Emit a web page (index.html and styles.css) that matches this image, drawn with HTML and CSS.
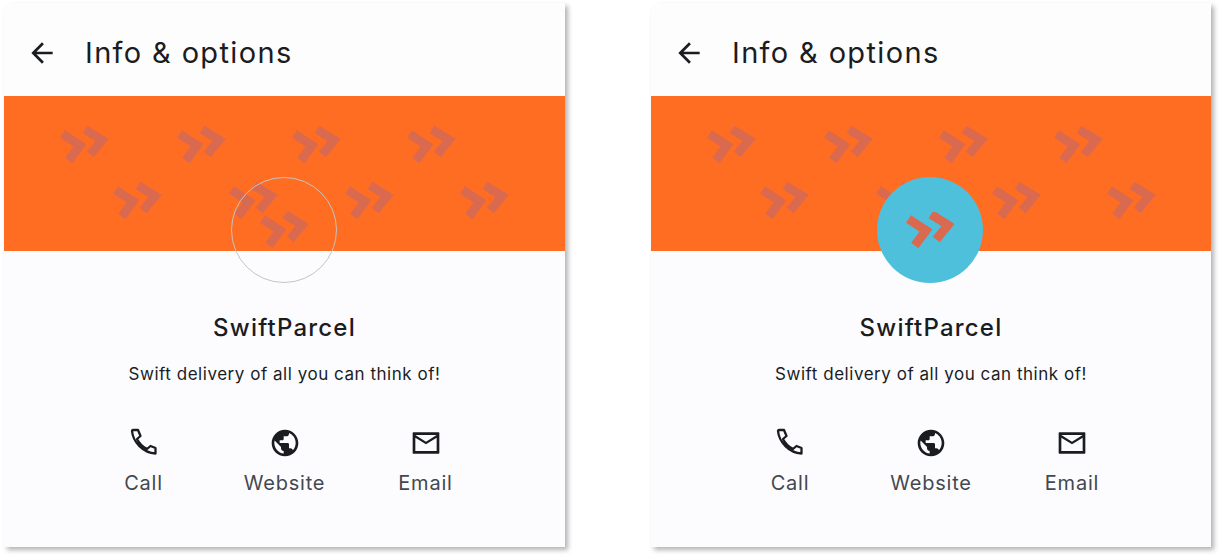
FILE: index.html
```html
<!DOCTYPE html>
<html lang="en">
<head>
<meta charset="utf-8">
<title>Info &amp; options</title>
<link rel="stylesheet" href="styles.css">
</head>
<body>
<svg class="defs" width="0" height="0" aria-hidden="true">
  <defs>
    <g id="motif">
      <path d="M2.5 7 L20 18.5 L8.8 33.5" />
      <path d="M25 2.5 L42 13 L30.2 27.5" />
    </g>
    <g id="pattern-row">
      <use href="#motif" x="56" y="31"/>
      <use href="#motif" x="173" y="31"/>
      <use href="#motif" x="288" y="31"/>
      <use href="#motif" x="403" y="31"/>
      <use href="#motif" x="109" y="87"/>
      <use href="#motif" x="225" y="87"/>
      <use href="#motif" x="341" y="87"/>
      <use href="#motif" x="456" y="87"/>
    </g>
    <g id="ic-back"><path d="M20 11H7.83l5.59-5.59L12 4l-8 8 8 8 1.41-1.41L7.83 13H20v-2z"/></g>
    <g id="ic-call" transform="scale(.75)"><path class="call-line" d="M4 4 Q4 3 5 3 L10 3 L12.5 9 L9 12 C11 16 15 20 19 22 L22.5 19 L27.5 21 L27.5 26.5 C15 26 5 15 4 4 Z"/></g>
    <g id="ic-web"><path d="M12 2C6.48 2 2 6.48 2 12s4.48 10 10 10 10-4.48 10-10S17.52 2 12 2zm-1 17.93c-3.95-.49-7-3.85-7-7.93 0-.62.08-1.21.21-1.79L9 15v1c0 1.1.9 2 2 2v1.93zm6.9-2.54c-.26-.81-1-1.39-1.9-1.39h-1v-3c0-.55-.45-1-1-1H8v-2h2c.55 0 1-.45 1-1V7h2c1.1 0 2-.9 2-2v-.41c2.93 1.19 5 4.06 5 7.41 0 2.08-.8 3.97-2.1 5.39z"/></g>
    <g id="ic-mail"><path fill-rule="evenodd" d="M2.5 4h19a.5.5 0 0 1 .5.5v15a.5.5 0 0 1-.5.5h-19a.5.5 0 0 1-.5-.5v-15a.5.5 0 0 1 .5-.5zm17.5 2l-8 5-8-5h16zm0 12H4V8l8 5 8-5v10z"/></g>
  </defs>
</svg>
<main class="page">
  <section class="card">
    <header class="top">
      <svg class="back" viewBox="0 0 24 24"><use href="#ic-back"/></svg>
      <h1 class="title">Info &amp; options</h1>
    </header>
    <div class="banner">
      <svg class="pattern" viewBox="0 0 561 155"><use href="#pattern-row"/></svg>
      <div class="avatar avatar-outline">
        <svg class="logo" viewBox="0 0 48 36"><use href="#motif"/></svg>
      </div>
    </div>
    <div class="body">
      <h2 class="name">SwiftParcel</h2>
      <p class="tagline">Swift delivery of all you can think of!</p>
      <ul class="actions">
        <li class="action"><svg class="icon" viewBox="0 0 24 24"><use href="#ic-call"/></svg><span class="label">Call</span></li>
        <li class="action"><svg class="icon" viewBox="0 0 24 24"><use href="#ic-web"/></svg><span class="label">Website</span></li>
        <li class="action"><svg class="icon" viewBox="0 0 24 24"><use href="#ic-mail"/></svg><span class="label">Email</span></li>
      </ul>
    </div>
  </section>
  <section class="card">
    <header class="top">
      <svg class="back" viewBox="0 0 24 24"><use href="#ic-back"/></svg>
      <h1 class="title">Info &amp; options</h1>
    </header>
    <div class="banner">
      <svg class="pattern" viewBox="0 0 561 155"><use href="#pattern-row"/></svg>
      <div class="avatar avatar-filled">
        <svg class="logo" viewBox="0 0 48 36"><use href="#motif"/></svg>
      </div>
    </div>
    <div class="body">
      <h2 class="name">SwiftParcel</h2>
      <p class="tagline">Swift delivery of all you can think of!</p>
      <ul class="actions">
        <li class="action"><svg class="icon" viewBox="0 0 24 24"><use href="#ic-call"/></svg><span class="label">Call</span></li>
        <li class="action"><svg class="icon" viewBox="0 0 24 24"><use href="#ic-web"/></svg><span class="label">Website</span></li>
        <li class="action"><svg class="icon" viewBox="0 0 24 24"><use href="#ic-mail"/></svg><span class="label">Email</span></li>
      </ul>
    </div>
  </section>
</main>
</body>
</html>
```
FILE: styles.css
```css
* { box-sizing: border-box; }
html, body { margin: 0; padding: 0; background: #fff; }
body { font-family: "Inter", "Liberation Sans", sans-serif; color: #1b1c1f; }
.defs { position: absolute; }
.page { display: flex; gap: 86px; padding: 3px 0 0 4px; width: 1221px; height: 556px; overflow: hidden; }
.card { width: 561px; height: 544px; background: #fcfcff; border-radius: 8px 0 0 0; box-shadow: 3px 3px 5px rgba(0,0,0,.3); display: flex; flex-direction: column; }
.card + .card { width: 560px; }
.top { height: 93px; background: #fdfdfd; border-radius: 8px 0 0 0; display: flex; align-items: center; padding: 6px 0 0 22px; flex: none; }
.back { width: 32px; height: 32px; fill: #1b1c1f; flex: none; }
.title { margin: 0 0 0 27px; font-size: 29px; line-height: 36px; font-weight: 400; letter-spacing: 1.35px; }
.banner { position: relative; height: 155px; background: #ff6d22; flex: none; }
.pattern { position: absolute; left: 0; top: 0; width: 561px; height: 155px; fill: none; stroke: #d96a50; stroke-width: 9; stroke-linecap: butt; }
.avatar { position: absolute; left: 227px; top: 81px; width: 106px; height: 106px; border-radius: 50%; display: flex; align-items: center; justify-content: center; }
.avatar-outline { border: 1px solid #c4c4c4; }
.avatar-filled { left: 226px; background: #4fc0dc; }
.logo { width: 48px; height: 36px; fill: none; stroke: #d96a50; stroke-width: 9; stroke-linecap: butt; }
.body { flex: 1; display: flex; flex-direction: column; align-items: center; padding-top: 61px; }
.name { margin: 0; font-size: 24px; line-height: 32px; font-weight: 500; letter-spacing: 1.2px; }
.tagline { margin: 18px 0 0; font-size: 17px; line-height: 24px; font-weight: 400; letter-spacing: .53px; }
.actions { list-style: none; margin: 41px 0 0; padding: 0; display: flex; justify-content: center; }
.action { width: 141px; display: flex; flex-direction: column; align-items: center; }
.icon { width: 32px; height: 32px; fill: #1b1c1f; }
.call-line { fill: none; stroke: #1b1c1f; stroke-width: 2.3; stroke-linejoin: round; }
.label { margin-top: 10px; font-size: 20px; line-height: 28px; color: #44484e; letter-spacing: .8px; }
```
